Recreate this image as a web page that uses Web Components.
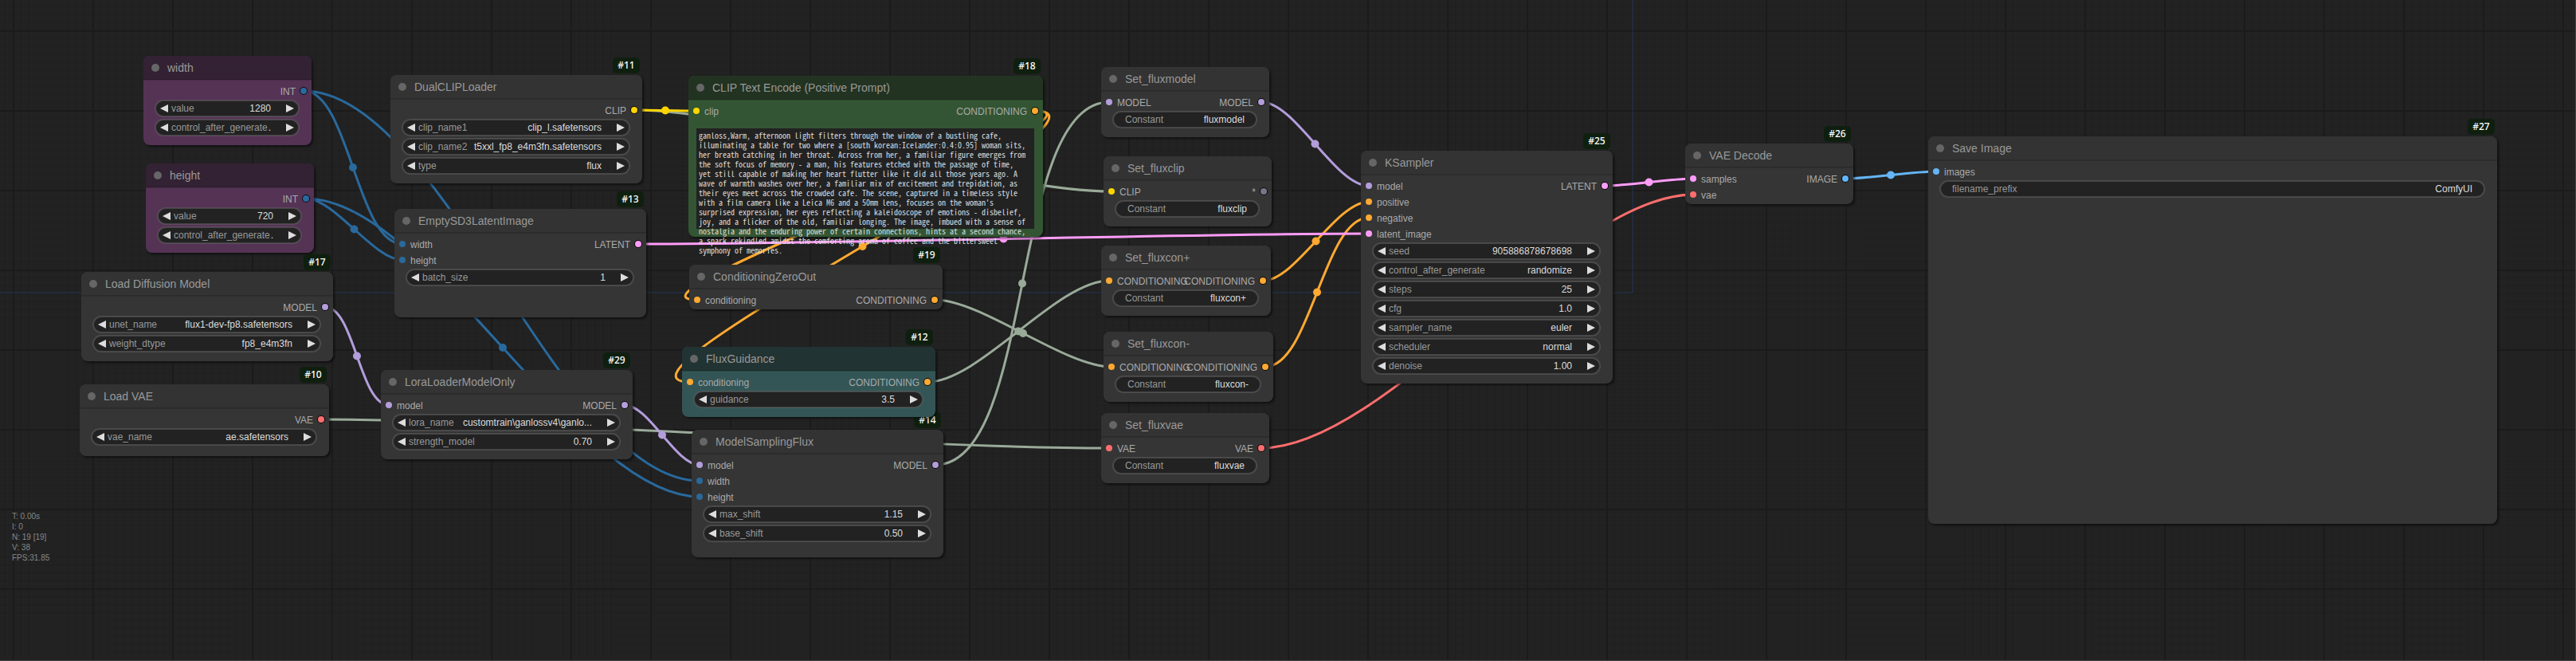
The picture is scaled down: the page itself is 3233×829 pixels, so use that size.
<!DOCTYPE html>
<html lang="en">
<head>
<meta charset="utf-8">
<title>ComfyUI</title>
<style>
  body { margin: 0; background: #222; font-family: "Liberation Sans", Arial, sans-serif; }
</style>
</head>
<body>
<flow-canvas>
  <flow-node id="width" heading="width" x="180" y="70" w="210" h="82" tone="purple">
    <flow-port slot="out" type="int">INT</flow-port>
    <flow-number label="value" value="1280"></flow-number>
    <flow-combo label="control_after_generate" value="."></flow-combo>
  </flow-node>
  <flow-node id="height" heading="height" x="183" y="205" w="210" h="82" tone="purple">
    <flow-port slot="out" type="int">INT</flow-port>
    <flow-number label="value" value="720"></flow-number>
    <flow-combo label="control_after_generate" value="."></flow-combo>
  </flow-node>
  <flow-node id="unet" heading="Load Diffusion Model" badge="#17" x="102" y="341" w="315" h="82">
    <flow-port slot="out" type="model">MODEL</flow-port>
    <flow-combo label="unet_name" value="flux1-dev-fp8.safetensors"></flow-combo>
    <flow-combo label="weight_dtype" value="fp8_e4m3fn"></flow-combo>
  </flow-node>
  <flow-node id="vae" heading="Load VAE" badge="#10" x="100" y="482" w="312" h="60">
    <flow-port slot="out" type="vae">VAE</flow-port>
    <flow-combo label="vae_name" value="ae.safetensors"></flow-combo>
  </flow-node>
  <flow-node id="clip" heading="DualCLIPLoader" badge="#11" x="490" y="94" w="315" h="106">
    <flow-port slot="out" type="clip">CLIP</flow-port>
    <flow-combo label="clip_name1" value="clip_l.safetensors"></flow-combo>
    <flow-combo label="clip_name2" value="t5xxl_fp8_e4m3fn.safetensors"></flow-combo>
    <flow-combo label="type" value="flux"></flow-combo>
  </flow-node>
  <flow-node id="latent" heading="EmptySD3LatentImage" badge="#13" x="495" y="262" w="315" h="106">
    <flow-port slot="in" type="int">width</flow-port>
    <flow-port slot="in" type="int">height</flow-port>
    <flow-port slot="out" type="latent">LATENT</flow-port>
    <flow-number label="batch_size" value="1"></flow-number>
  </flow-node>
  <flow-node id="lora" heading="LoraLoaderModelOnly" badge="#29" x="478" y="464" w="315" h="82">
    <flow-port slot="in" type="model">model</flow-port>
    <flow-port slot="out" type="model">MODEL</flow-port>
    <flow-combo label="lora_name" value="customtrain\ganlossv4\ganlo..."></flow-combo>
    <flow-number label="strength_model" value="0.70"></flow-number>
  </flow-node>
  <flow-node id="zero" heading="ConditioningZeroOut" badge="#19" x="865" y="332" w="317" h="26">
    <flow-port slot="in" type="cond">conditioning</flow-port>
    <flow-port slot="out" type="cond">CONDITIONING</flow-port>
  </flow-node>
  <flow-node id="sampling" heading="ModelSamplingFlux" badge="#14" x="868" y="539" w="315" h="130">
    <flow-port slot="in" type="model">model</flow-port>
    <flow-port slot="in" type="int">width</flow-port>
    <flow-port slot="in" type="int">height</flow-port>
    <flow-port slot="out" type="model">MODEL</flow-port>
    <flow-number label="max_shift" value="1.15"></flow-number>
    <flow-number label="base_shift" value="0.50"></flow-number>
  </flow-node>
  <flow-node id="guidance" heading="FluxGuidance" badge="#12" x="856" y="435" w="317" h="58" tone="cyan">
    <flow-port slot="in" type="cond">conditioning</flow-port>
    <flow-port slot="out" type="cond">CONDITIONING</flow-port>
    <flow-number label="guidance" value="3.5"></flow-number>
  </flow-node>
  <flow-node id="prompt" heading="CLIP Text Encode (Positive Prompt)" badge="#18" x="864" y="95" w="444" h="172" tone="green">
    <flow-port slot="in" type="clip">clip</flow-port>
    <flow-port slot="out" type="cond">CONDITIONING</flow-port>
    <flow-prompt slot="content" label="Positive prompt">ganloss,Warm, afternoon light filters through the window of a bustling cafe,
illuminating a table for two where a [south korean:Icelander:0.4:0.95] woman sits,
her breath catching in her throat. Across from her, a familiar figure emerges from
the soft focus of memory - a man, his features etched with the passage of time,
yet still capable of making her heart flutter like it did all those years ago. A
wave of warmth washes over her, a familiar mix of excitement and trepidation, as
their eyes meet across the crowded cafe. The scene, captured in a timeless style
with a film camera like a Leica M6 and a 50mm lens, focuses on the woman's
surprised expression, her eyes reflecting a kaleidoscope of emotions - disbelief,
joy, and a flicker of the old, familiar longing. The image, imbued with a sense of
nostalgia and the enduring power of certain connections, hints at a second chance,
a spark rekindled amidst the comforting aroma of coffee and the bittersweet
symphony of memories.</flow-prompt>
  </flow-node>
  <flow-node id="set-model" heading="Set_fluxmodel" x="1382" y="84" w="210" h="58">
    <flow-port slot="in" type="model">MODEL</flow-port>
    <flow-port slot="out" type="model">MODEL</flow-port>
    <flow-text label="Constant" value="fluxmodel"></flow-text>
  </flow-node>
  <flow-node id="set-clip" heading="Set_fluxclip" x="1385" y="196" w="210" h="58">
    <flow-port slot="in" type="clip">CLIP</flow-port>
    <flow-port slot="out" type="any">*</flow-port>
    <flow-text label="Constant" value="fluxclip"></flow-text>
  </flow-node>
  <flow-node id="set-pos" heading="Set_fluxcon+" x="1382" y="308" w="212" h="58">
    <flow-port slot="in" type="cond">CONDITIONING</flow-port>
    <flow-port slot="out" type="cond">CONDITIONING</flow-port>
    <flow-text label="Constant" value="fluxcon+"></flow-text>
  </flow-node>
  <flow-node id="set-neg" heading="Set_fluxcon-" x="1385" y="416" w="212" h="58">
    <flow-port slot="in" type="cond">CONDITIONING</flow-port>
    <flow-port slot="out" type="cond">CONDITIONING</flow-port>
    <flow-text label="Constant" value="fluxcon-"></flow-text>
  </flow-node>
  <flow-node id="set-vae" heading="Set_fluxvae" x="1382" y="518" w="210" h="58">
    <flow-port slot="in" type="vae">VAE</flow-port>
    <flow-port slot="out" type="vae">VAE</flow-port>
    <flow-text label="Constant" value="fluxvae"></flow-text>
  </flow-node>
  <flow-node id="sampler" heading="KSampler" badge="#25" x="1708" y="189" w="315" h="262">
    <flow-port slot="in" type="model">model</flow-port>
    <flow-port slot="in" type="cond">positive</flow-port>
    <flow-port slot="in" type="cond">negative</flow-port>
    <flow-port slot="in" type="latent">latent_image</flow-port>
    <flow-port slot="out" type="latent">LATENT</flow-port>
    <flow-number label="seed" value="905886878678698"></flow-number>
    <flow-combo label="control_after_generate" value="randomize"></flow-combo>
    <flow-number label="steps" value="25"></flow-number>
    <flow-number label="cfg" value="1.0"></flow-number>
    <flow-combo label="sampler_name" value="euler"></flow-combo>
    <flow-combo label="scheduler" value="normal"></flow-combo>
    <flow-number label="denoise" value="1.00"></flow-number>
  </flow-node>
  <flow-node id="decode" heading="VAE Decode" badge="#26" x="2115" y="180" w="210" h="46">
    <flow-port slot="in" type="latent">samples</flow-port>
    <flow-port slot="in" type="vae">vae</flow-port>
    <flow-port slot="out" type="image">IMAGE</flow-port>
  </flow-node>
  <flow-node id="save" heading="Save Image" badge="#27" x="2420" y="171" w="713" h="456">
    <flow-port slot="in" type="image">images</flow-port>
    <flow-text label="filename_prefix" value="ComfyUI"></flow-text>
  </flow-node>
  <flow-stats slot="stats"></flow-stats>
</flow-canvas>

<script>
const COLORS = {
  int: '#29699c', model: '#b39ddb', clip: '#ffd500', cond: '#ffa931', latent: '#ff9cf9',
  vae: '#ff6e6e', image: '#64b5f6', any: '#778', set: '#9a9'
};
const TONES = {
  plain: ['#333', '#353535'], purple: ['#323', '#535'], green: ['#232', '#353'], cyan: ['#233', '#355']
};
/* from node, output index, to node, input index, colour */
const LINKS = [
  ['clip', 0, 'set-clip', 0, 'set'],
  ['clip', 0, 'prompt', 0, 'clip'],
  ['width', 0, 'latent', 0, 'int'],
  ['width', 0, 'sampling', 1, 'int'],
  ['height', 0, 'latent', 1, 'int'],
  ['height', 0, 'sampling', 2, 'int'],
  ['unet', 0, 'lora', 0, 'model'],
  ['vae', 0, 'set-vae', 0, 'set'],
  ['lora', 0, 'sampling', 0, 'model'],
  ['prompt', 0, 'zero', 0, 'cond'],
  ['prompt', 0, 'guidance', 0, 'cond'],
  ['sampling', 0, 'set-model', 0, 'set'],
  ['guidance', 0, 'set-pos', 0, 'set'],
  ['zero', 0, 'set-neg', 0, 'set'],
  ['set-model', 0, 'sampler', 0, 'model'],
  ['set-pos', 0, 'sampler', 1, 'cond'],
  ['set-neg', 0, 'sampler', 2, 'cond'],
  ['latent', 0, 'sampler', 3, 'latent'],
  ['sampler', 0, 'decode', 0, 'latent'],
  ['set-vae', 0, 'decode', 1, 'vae'],
  ['decode', 0, 'save', 0, 'image']
];

class FlowCanvas extends HTMLElement {
  connectedCallback() {
    const root = this.attachShadow({ mode: 'open' });
    const box = id => {
      const n = this.querySelector('#' + id);
      return ['x', 'y', 'w'].map(k => Number(n.getAttribute(k)));
    };
    const lines = LINKS.map(([from, o, to, i, type]) => {
      const [fx, fy, fw] = box(from), [tx, ty] = box(to);
      const a = [fx + fw - 9, fy + 44 + 20 * o], b = [tx + 10, ty + 44 + 20 * i];
      const d = Math.hypot(b[0] - a[0], b[1] - a[1]) / 4;
      return `<path d="M${a} C${a[0] + d},${a[1]} ${b[0] - d},${b[1]} ${b}" fill="none" stroke="${COLORS[type]}" stroke-width="3"/>
        <circle cx="${(a[0] + b[0]) / 2}" cy="${(a[1] + b[1]) / 2}" r="5" fill="${COLORS[type]}"/>`;
    }).join('');
    root.innerHTML = `<style>
      :host { display: block; position: relative; box-sizing: border-box; min-height: 100vh; overflow: hidden;
        border-right: 1px solid #444; border-bottom: 1px solid #444;
        background-color: #222;
        background-image:
          linear-gradient(90deg, #1b1b1b 2px, transparent 2px), linear-gradient(#1b1b1b 2px, transparent 2px),
          linear-gradient(90deg, #1f1f1f 1px, transparent 1px), linear-gradient(#1f1f1f 1px, transparent 1px);
        background-size: 100px 100px, 100px 100px, 10px 10px, 10px 10px;
        background-position: 16px 0, 0 38px, 6px 0, 0 8px; }
      svg { position: absolute; inset: 0; width: 100%; height: 100%; }
    </style>
    <svg aria-hidden="true"><path d="M0 367H2049V0" fill="none" stroke="#235" stroke-opacity=".5" stroke-width="2"/>${lines}</svg>
    <slot></slot><slot name="stats"></slot>`;
  }
}

class FlowNode extends HTMLElement {
  connectedCallback() {
    const at = k => this.getAttribute(k);
    const [head, body] = TONES[at('tone') || 'plain'];
    this.attachShadow({ mode: 'open' }).innerHTML = `<style>
      :host { position: absolute; left: ${at('x')}px; top: ${at('y')}px; width: ${Number(at('w')) + 1}px;
        border-radius: 8px; background: ${body}; box-shadow: 2px 2px 3px rgba(0,0,0,.5); }
      header { display: flex; align-items: center; gap: 10px; height: 30px; box-sizing: border-box; padding-left: 10px;
        border-radius: 8px 8px 0 0; background: ${head}; border-bottom: 1px solid rgba(0,0,0,.15); box-shadow: 0 1px rgba(0,0,0,.15); }
      header i { width: 10px; height: 10px; border-radius: 50%; background: #666; }
      h2 { margin: 0; font-size: 14px; line-height: 30px; font-weight: 400; color: #999; white-space: nowrap; }
      .body { min-height: ${at('h')}px; box-sizing: border-box; padding-top: 4px; }
      .ports { display: grid; }
      .ports div { grid-area: 1 / 1; display: flex; flex-direction: column; }
      .ports .in { justify-self: start; } .ports .out { justify-self: end; }
      .widgets { display: flex; flex-direction: column; gap: 4px; padding: 2px 16px 0 15px; }
      .badge { position: absolute; right: 3px; top: -22px; width: 34px; height: 20px; border-radius: 5px;
        background: #0f1f0f; color: #fff; font: 500 12px/20px "Noto Sans", sans-serif; text-align: center; }
    </style>
    ${at('badge') ? `<span class="badge">${at('badge')}</span>` : ''}
    <header><i></i><h2>${at('heading')}</h2></header>
    <div class="body">
      <div class="ports"><div class="in"><slot name="in"></slot></div><div class="out"><slot name="out"></slot></div></div>
      <div class="widgets"><slot></slot></div>
      <slot name="content"></slot>
    </div>`;
  }
}

class FlowPort extends HTMLElement {
  connectedCallback() {
    const out = this.slot === 'out';
    this.attachShadow({ mode: 'open' }).innerHTML = `<style>
      :host { display: flex; flex-direction: ${out ? 'row-reverse' : 'row'}; align-items: center; gap: 6px;
        height: 20px; padding: 0 6px; font-size: 12px; color: #aaa; white-space: nowrap; }
      i { width: 8px; height: 8px; border-radius: 50%; background: ${COLORS[this.getAttribute('type')]};
        ${out ? 'box-shadow: 0 0 0 1px rgba(0,0,0,.8);' : ''} }
      span { padding-top: 2px; line-height: 18px; }
    </style><i></i><span><slot></slot></span>`;
  }
}

const FIELD_STYLE = `
  :host { display: flex; align-items: center; height: 20px; box-sizing: border-box; border-radius: 10px;
    border: 1px solid rgba(102,102,102,.5); box-shadow: 0 0 0 1px rgba(102,102,102,.5);
    background: #222; font-size: 12px; line-height: 18px; }
  label { color: #999; white-space: nowrap; }
  input, select { flex: 1; min-width: 0; width: 0; height: 18px; margin: 0; padding: 0; border: 0; outline: 0; appearance: none;
    background: none; color: #ddd; font: inherit; text-align: right; text-align-last: right; }
  button { width: 10px; height: 10px; margin: 0 5px; padding: 0; border: 0; background: #ddd; }
  .prev { clip-path: polygon(100% 0, 100% 100%, 0 50%); margin-right: 4px; }
  .next { clip-path: polygon(0 0, 100% 50%, 0 100%); margin-left: 19px; }`;

class FlowField extends HTMLElement {
  connectedCallback() {
    const label = this.getAttribute('label'), value = this.getAttribute('value');
    this.attachShadow({ mode: 'open' }).innerHTML = `<style>${FIELD_STYLE}${this.extraStyle}</style>
      ${this.arrows ? '<button class="prev" aria-label="Previous"></button>' : ''}
      <label for="f">${label}</label>${this.control(value)}
      ${this.arrows ? '<button class="next" aria-label="Next"></button>' : ''}`;
  }
  get arrows() { return true; }
  get extraStyle() { return ''; }
  control(value) { return `<input id="f" inputmode="decimal" value="${value}">`; }
}
class FlowNumber extends FlowField {}
class FlowCombo extends FlowField {
  control(value) { return `<select id="f"><option>${value}</option></select>`; }
}
class FlowText extends FlowField {
  get arrows() { return false; }
  get extraStyle() { return ':host { padding: 0 14px; }'; }
  control(value) { return `<input id="f" type="text" value="${value}">`; }
}

class FlowPrompt extends HTMLElement {
  connectedCallback() {
    this.attachShadow({ mode: 'open' }).innerHTML = `<style>
      :host { display: block; height: 126px; margin: 10px 11px 0 10px; background: #222; }
      textarea { display: block; box-sizing: border-box; width: 100%; height: 162px; margin: 0; padding: 3px; border: 0; outline: 0;
        resize: none; overflow: hidden; background: none; color: #ddd; white-space: pre;
        font: 10px/12px "Noto Sans Mono CJK SC", "Liberation Mono", monospace; }
    </style><textarea spellcheck="false" aria-label="${this.getAttribute('label')}"></textarea>`;
    this.shadowRoot.querySelector('textarea').value = this.textContent;
  }
}

class FlowStats extends HTMLElement {
  connectedCallback() {
    this.attachShadow({ mode: 'open' }).innerHTML = `<style>
      :host { position: absolute; left: 15px; bottom: 122px; font-size: 10px; line-height: 13px; color: #888; }
      div { white-space: pre; }
    </style><div>T: 0.00s</div><div>I: 0</div><div>N: 19 [19]</div><div>V: 38</div><div>FPS:31.85</div>`;
  }
}

customElements.define('flow-canvas', FlowCanvas);
customElements.define('flow-node', FlowNode);
customElements.define('flow-port', FlowPort);
customElements.define('flow-number', FlowNumber);
customElements.define('flow-combo', FlowCombo);
customElements.define('flow-text', FlowText);
customElements.define('flow-prompt', FlowPrompt);
customElements.define('flow-stats', FlowStats);
</script>
</body>
</html>
